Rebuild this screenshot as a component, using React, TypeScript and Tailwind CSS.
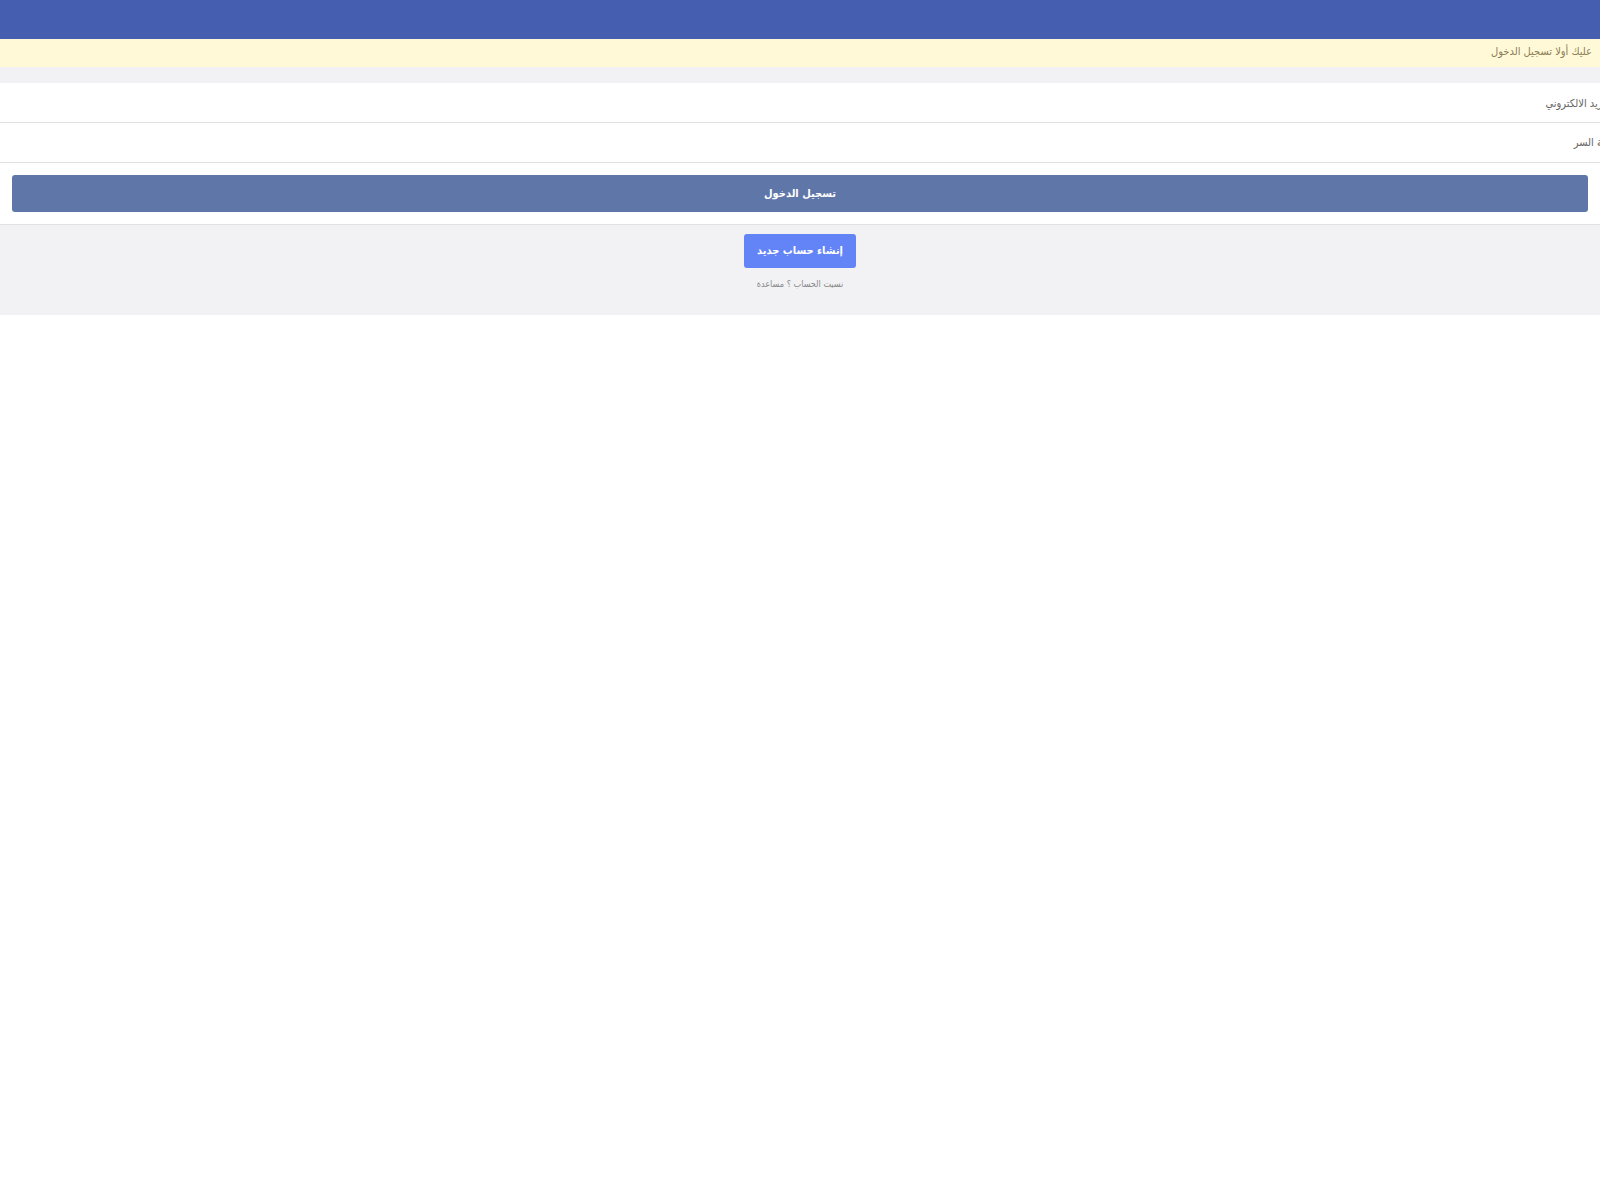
export default function App() {
  return (
    <div dir="rtl" className="min-h-screen bg-white text-[11px]" style={{ fontFamily: '"DejaVu Sans Condensed", "DejaVu Sans", sans-serif' }}>
      {/* Header bar */}
      <div className="h-[39px] bg-[#465eb0]" />

      {/* Notice */}
      <div className="flex h-[28px] items-center bg-[#fff9d8] px-2 pb-[2px] text-[#8b7d55]">
        عليك أولا تسجيل الدخول
      </div>

      <div className="h-[16px] bg-[#f2f2f4]" />

      {/* Form */}
      <div className="bg-white">
        <div className="flex h-[40px] items-center overflow-hidden border-b border-[#e2e2e2] pt-[3px]">
          <span className="-mr-[12px] whitespace-nowrap text-[#666]">البريد الالكتروني</span>
        </div>
        <div className="flex h-[40px] items-center overflow-hidden border-b border-[#e2e2e2] pt-[1px]">
          <span className="-mr-[16px] whitespace-nowrap text-[#666]">كلمة السر</span>
        </div>
        <div className="px-3 py-[12px]">
          <button className="flex h-[37px] w-full items-center justify-center rounded-[3px] bg-[#5e76a8] pt-[1px] font-bold text-white">
            تسجيل الدخول
          </button>
        </div>
      </div>

      {/* Footer */}
      <div className="flex flex-col items-center border-t border-[#e2e2e2] bg-[#f2f2f4] pt-[9px] pb-[23px]">
        <button className="flex h-[34px] w-[112px] items-center justify-center rounded-[3px] bg-[#6384f6] font-bold text-white">
          إنشاء حساب جديد
        </button>
        <div className="mt-[10px] text-[9px] text-[#888]">نسيت الحساب ؟ مساعدة</div>
      </div>
    </div>
  );
}
